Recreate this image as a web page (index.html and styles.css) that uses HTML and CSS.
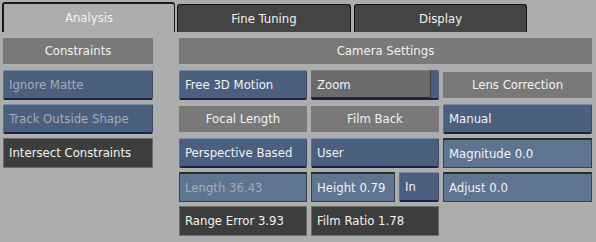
FILE: index.html
```html
<!DOCTYPE html>
<html>
	<head>
		<meta charset="UTF-8">
		<title>Analysis</title>
		<link rel="stylesheet" href="styles.css">
	</head>
	<body>
		<div class="tabs">
			<div class="tab active">Analysis</div>
			<div class="tab">Fine Tuning</div>
			<div class="tab last">Display</div>
		</div>
		<div class="panel">
			<div class="side">
				<div class="head">Constraints</div>
				<div class="btn off">Ignore Matte</div>
				<div class="btn off">Track Outside Shape</div>
				<div class="dark">Intersect Constraints</div>
			</div>
			<div class="main">
				<div class="head">Camera Settings</div>
				<div class="grid">
					<div class="btn">Free 3D Motion</div>
					<div class="menu"><span>Zoom</span></div>
					<div class="label">Lens Correction</div>

					<div class="label">Focal Length</div>
					<div class="label">Film Back</div>
					<div class="btn">Manual</div>

					<div class="btn">Perspective Based</div>
					<div class="btn">User</div>
					<div class="field">Magnitude 0.0</div>

					<div class="field off">Length 36.43</div>
					<div class="pair">
						<div class="field">Height 0.79</div>
						<div class="btn small">In</div>
					</div>
					<div class="field">Adjust 0.0</div>

					<div class="dark">Range Error 3.93</div>
					<div class="dark">Film Ratio 1.78</div>
				</div>
			</div>
		</div>
	</body>
</html>
```

FILE: styles.css
```css
*{
	margin: 0;
	padding: 0;
	box-sizing: border-box;
}
body{
	background-color: #adadad;
	font-family: "DejaVu Sans Condensed", "DejaVu Sans", sans-serif;
	font-stretch: condensed;
	font-size: 13px;
	color: #f2f2f2;
	width: 596px;
	height: 242px;
	overflow: hidden;
}
.tabs{
	display: flex;
	height: 32px;
	padding: 2px 0 0 2px;
}
.tab{
	width: 174px;
	height: 28px;
	margin: 2px 0 0 2px;
	background-color: #444;
	border: 1px solid #111;
	border-bottom: none;
	border-radius: 3px 3px 0 0;
	text-align: center;
	line-height: 28px;
}
.tab.active{
	width: 173px;
	height: 30px;
	margin: 0;
	background-color: #adadad;
	border-width: 2px 1px 0 2px;
	border-color: #1a1a1a;
	line-height: 28px;
}
.tab.last{
	width: 173px;
	margin-left: 3px;
}
.panel{
	display: flex;
	padding: 6px 0 0 3px;
}
.side{
	width: 150px;
	display: flex;
	flex-direction: column;
	gap: 4px;
}
.side .head{
	margin-bottom: 2px;
}
.main{
	width: 413px;
	margin-left: 26px;
}
.main .head{
	margin-bottom: 6px;
}
.head{
	height: 26px;
	line-height: 26px;
	background-color: #797979;
	text-align: center;
}
.grid{
	display: grid;
	grid-template-columns: 128px 128px 149px;
	grid-auto-rows: 30px;
	gap: 4px;
}
.btn{
	height: 30px;
	line-height: 27px;
	padding-left: 5px;
	background-color: #4b5f7e;
	border-top: 1px solid #7487a3;
	border-left: 1px solid #5a6e8c;
	border-right: 1px solid #3a4a66;
	border-bottom: 2px solid #1b2247;
	border-radius: 2px;
	white-space: nowrap;
}
.off{
	color: #a3acba;
}
.label{
	height: 26px;
	margin-top: 2px;
	line-height: 26px;
	background-color: #797979;
	text-align: center;
}
.field{
	height: 30px;
	line-height: 27px;
	padding-left: 5px;
	background-color: #5e7592;
	border: 1px solid #3a3f48;
	border-top: 2px solid #2b2b2b;
	white-space: nowrap;
}
.dark{
	height: 30px;
	line-height: 28px;
	padding-left: 5px;
	background-color: #3d3d3d;
	border: 1px solid #6b6b6b;
	white-space: nowrap;
}
.menu{
	display: flex;
	height: 30px;
	background-color: #4b5f7e;
	border-radius: 2px;
	border-bottom: 2px solid #1b2247;
}
.menu span{
	width: 120px;
	height: 28px;
	line-height: 27px;
	padding-left: 6px;
	background-color: #6b6b6b;
	border-top: 1px solid #7c7c7c;
	border-right: 1px solid #3a3a3a;
	border-bottom: 1px solid #2a2a2a;
}
.pair{
	display: flex;
	gap: 4px;
}
.pair .field{
	width: 84px;
}
.pair .small{
	width: 40px;
}
```
